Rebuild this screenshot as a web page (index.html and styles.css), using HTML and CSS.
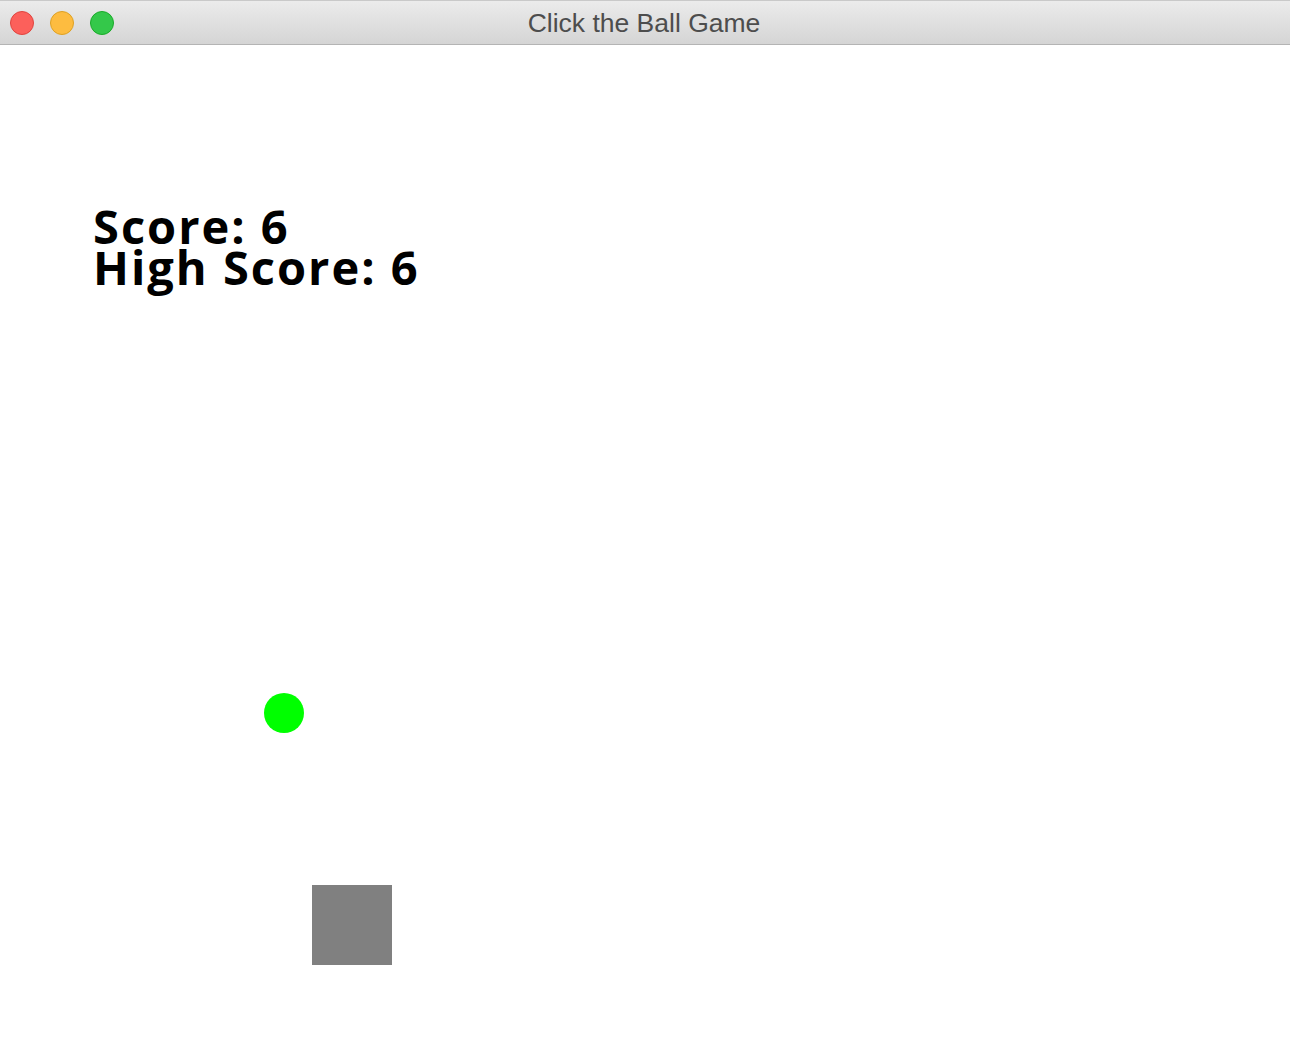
FILE: index.html
```html
<!DOCTYPE html>
<html>
<head>
<meta charset="utf-8">
<title>Click the Ball Game</title>
<link rel="stylesheet" href="styles.css">
</head>
<body>
<div class="window">
  <div class="titlebar">
    <div class="lights">
      <span class="light red"></span>
      <span class="light yellow"></span>
      <span class="light green"></span>
    </div>
    <div class="title">Click the Ball Game</div>
  </div>
  <div class="canvas">
    <div class="scores">
      <div class="score">Score: 6</div>
      <div class="score">High Score: 6</div>
    </div>
    <div class="ball"></div>
    <div class="block"></div>
  </div>
</div>
</body>
</html>
```
FILE: styles.css
```css
html, body {
  margin: 0;
  padding: 0;
  background: #ffffff;
}
.window {
  width: 1290px;
  height: 1044px;
  display: flex;
  flex-direction: column;
  overflow: hidden;
}
.titlebar {
  background: linear-gradient(#ebebeb, #d5d5d5);
  border-top: 1px solid #c9c9c9;
  border-bottom: 1px solid #b4b4b4;
  box-sizing: border-box;
  height: 45px;
  flex: 0 0 45px;
  position: relative;
  display: flex;
  align-items: center;
  justify-content: center;
}
.lights {
  position: absolute;
  left: 10px;
  top: 10px;
  display: flex;
  gap: 16px;
}
.light {
  width: 24px;
  height: 24px;
  border-radius: 50%;
  box-sizing: border-box;
  display: block;
}
.red { background: #fc605b; border: 1px solid #e0443e; }
.yellow { background: #fdbc40; border: 1px solid #dea123; }
.green { background: #34c84a; border: 1px solid #1aab29; }
.title {
  font-family: "Liberation Sans", Arial, sans-serif;
  font-size: 26.5px;
  color: #4d4d4d;
  margin-left: -2px;
  margin-top: 2px;
}
.canvas {
  flex: 1;
  position: relative;
  background: #ffffff;
}
.scores {
  padding: 161px 0 0 93px;
  font-family: "Open Sans", "DejaVu Sans", sans-serif;
  font-weight: 700;
  font-size: 47px;
  letter-spacing: 2px;
  color: #000;
  display: flex;
  flex-direction: column;
  gap: 0;
}
.score {
  line-height: 41px;
  height: 41px;
}
.ball {
  position: absolute;
  left: 264px;
  top: 648px;
  width: 40px;
  height: 40px;
  border-radius: 50%;
  background: #00ff00;
}
.block {
  position: absolute;
  left: 312px;
  top: 840px;
  width: 80px;
  height: 80px;
  background: #808080;
}
```
